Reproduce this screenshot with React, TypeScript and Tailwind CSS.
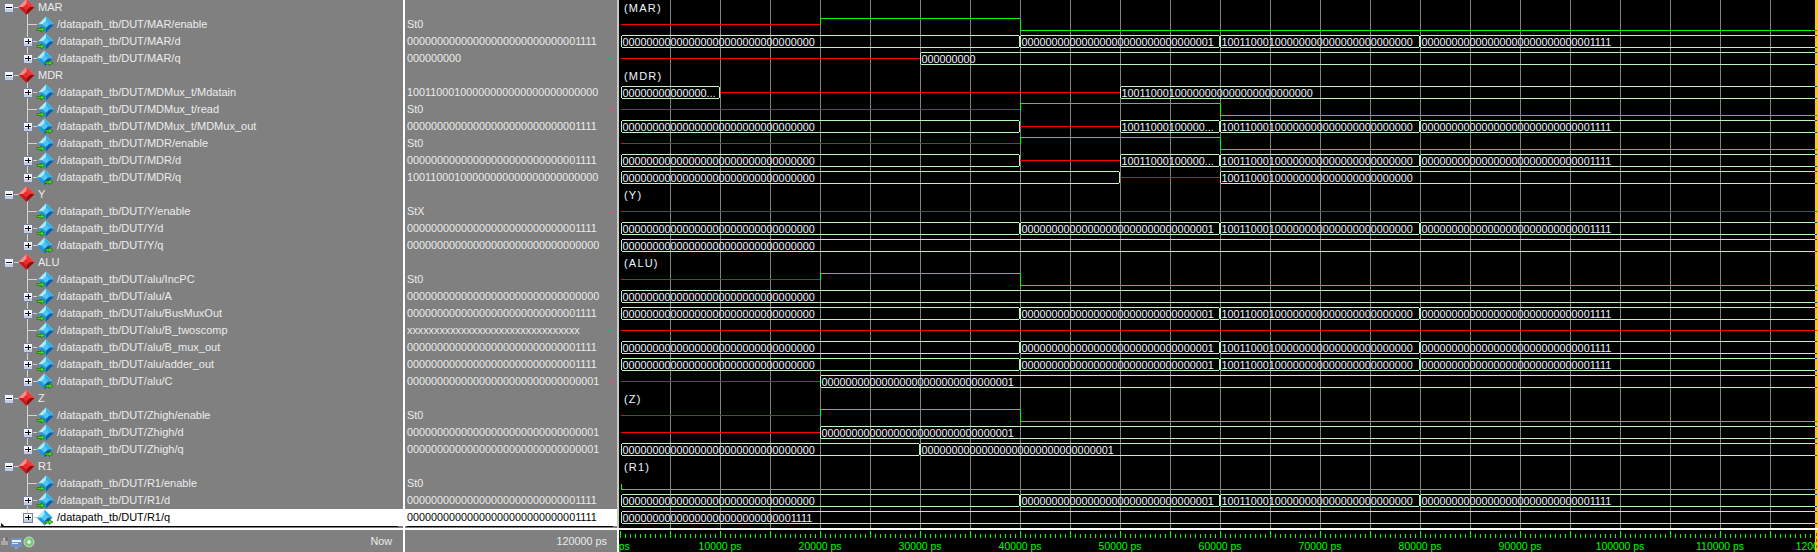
import React from "react";

const Z = "0".repeat(32);
const P = "0".repeat(31) + "1";
const F = "0".repeat(28) + "1111";
const M = "10011000100000000000000000000000";
const X = "x".repeat(32);
const END = 1815;
const S = 621;

type State = "red" | "hi" | "lo";
type Wave =
  | { type: "bit"; pts: [number, State][] }
  | {
      type: "bus";
      segs: { a: number; b: number; kind: "bus" | "red"; text?: string }[];
    }
  | { type: "none" };

const enablePulse = (x1: number, x2: number): Wave => ({
  type: "bit",
  pts: [
    [S, "red"],
    [x1, "hi"],
    [x2, "lo"],
  ],
});

const busD: Wave = {
  type: "bus",
  segs: [
    { a: S, b: 1020, kind: "bus", text: Z },
    { a: 1020, b: 1220, kind: "bus", text: P },
    { a: 1220, b: 1420, kind: "bus", text: M },
    { a: 1420, b: END, kind: "bus", text: F },
  ],
};
const busOut: Wave = {
  type: "bus",
  segs: [
    { a: S, b: 1020, kind: "bus", text: Z },
    { a: 1020, b: 1120, kind: "red" },
    { a: 1120, b: 1220, kind: "bus", text: "10011000100000..." },
    { a: 1220, b: 1420, kind: "bus", text: M },
    { a: 1420, b: END, kind: "bus", text: F },
  ],
};
const full = (text: string): Wave => ({
  type: "bus",
  segs: [{ a: S, b: END, kind: "bus", text }],
});
const redFull: Wave = { type: "bit", pts: [[S, "red"]] };
const busC: Wave = {
  type: "bus",
  segs: [
    { a: S, b: 820, kind: "red" },
    { a: 820, b: END, kind: "bus", text: P },
  ],
};

type Row = {
  group?: string;
  name?: string;
  value?: string;
  dir?: "in" | "out";
  bus?: boolean;
  last?: boolean;
  wave: Wave;
};

const rows: Row[] = [
  { group: "MAR", wave: { type: "none" } },
  { name: "/datapath_tb/DUT/MAR/enable", value: "St0", dir: "in", wave: enablePulse(820, 1020) },
  { name: "/datapath_tb/DUT/MAR/d", value: F, dir: "in", bus: true, wave: busD },
  {
    name: "/datapath_tb/DUT/MAR/q",
    value: "000000000",
    dir: "out",
    bus: true,
    last: true,
    wave: {
      type: "bus",
      segs: [
        { a: S, b: 920, kind: "red" },
        { a: 920, b: END, kind: "bus", text: "000000000" },
      ],
    },
  },
  { group: "MDR", wave: { type: "none" } },
  {
    name: "/datapath_tb/DUT/MDMux_t/Mdatain",
    value: M,
    dir: "in",
    bus: true,
    wave: {
      type: "bus",
      segs: [
        { a: S, b: 720, kind: "bus", text: "00000000000000..." },
        { a: 720, b: 1120, kind: "red" },
        { a: 1120, b: END, kind: "bus", text: M },
      ],
    },
  },
  { name: "/datapath_tb/DUT/MDMux_t/read", value: "St0", dir: "in", wave: enablePulse(1020, 1220) },
  { name: "/datapath_tb/DUT/MDMux_t/MDMux_out", value: F, dir: "out", bus: true, wave: busOut },
  { name: "/datapath_tb/DUT/MDR/enable", value: "St0", dir: "in", wave: enablePulse(1020, 1220) },
  { name: "/datapath_tb/DUT/MDR/d", value: F, dir: "in", bus: true, wave: busOut },
  {
    name: "/datapath_tb/DUT/MDR/q",
    value: M,
    dir: "out",
    bus: true,
    last: true,
    wave: {
      type: "bus",
      segs: [
        { a: S, b: 1120, kind: "bus", text: Z },
        { a: 1120, b: 1220, kind: "red" },
        { a: 1220, b: END, kind: "bus", text: M },
      ],
    },
  },
  { group: "Y", wave: { type: "none" } },
  { name: "/datapath_tb/DUT/Y/enable", value: "StX", dir: "in", wave: redFull },
  { name: "/datapath_tb/DUT/Y/d", value: F, dir: "in", bus: true, wave: busD },
  { name: "/datapath_tb/DUT/Y/q", value: Z, dir: "out", bus: true, last: true, wave: full(Z) },
  { group: "ALU", wave: { type: "none" } },
  { name: "/datapath_tb/DUT/alu/IncPC", value: "St0", dir: "in", wave: enablePulse(820, 1020) },
  { name: "/datapath_tb/DUT/alu/A", value: Z, dir: "in", bus: true, wave: full(Z) },
  { name: "/datapath_tb/DUT/alu/BusMuxOut", value: F, dir: "in", bus: true, wave: busD },
  { name: "/datapath_tb/DUT/alu/B_twoscomp", value: X, dir: "in", wave: redFull },
  { name: "/datapath_tb/DUT/alu/B_mux_out", value: F, dir: "in", bus: true, wave: busD },
  { name: "/datapath_tb/DUT/alu/adder_out", value: F, dir: "in", bus: true, wave: busD },
  { name: "/datapath_tb/DUT/alu/C", value: P, dir: "out", bus: true, last: true, wave: busC },
  { group: "Z", wave: { type: "none" } },
  { name: "/datapath_tb/DUT/Zhigh/enable", value: "St0", dir: "in", wave: enablePulse(820, 1020) },
  { name: "/datapath_tb/DUT/Zhigh/d", value: P, dir: "in", bus: true, wave: busC },
  {
    name: "/datapath_tb/DUT/Zhigh/q",
    value: P,
    dir: "out",
    bus: true,
    last: true,
    wave: {
      type: "bus",
      segs: [
        { a: S, b: 920, kind: "bus", text: Z },
        { a: 920, b: END, kind: "bus", text: P },
      ],
    },
  },
  { group: "R1", wave: { type: "none" } },
  {
    name: "/datapath_tb/DUT/R1/enable",
    value: "St0",
    dir: "in",
    wave: {
      type: "bit",
      pts: [
        [S, "red"],
        [S, "lo"],
      ],
    },
  },
  { name: "/datapath_tb/DUT/R1/d", value: F, dir: "in", bus: true, wave: busD },
  { name: "/datapath_tb/DUT/R1/q", value: F, dir: "out", bus: true, last: true, wave: full(F) },
];

const LINE = "#d4d4d4";

function Box({ minus, x }: { minus?: boolean; x: number }) {
  return (
    <g shapeRendering="crispEdges">
      <rect x={x + 0.5} y={4.5} width={9} height={9} fill="#f4f6fb" stroke="#76809f" />
      <rect x={x + 1} y={10} width={8} height={3} fill="#c4cce2" />
      <rect x={x + 2} y={8} width={6} height={1} fill="#000" />
      {!minus && <rect x={x + 4.5} y={6} width={1} height={5} fill="#000" />}
    </g>
  );
}

function Diamond({ cx, cy, r, c }: { cx: number; cy: number; r: number; c: string[] }) {
  const t = `${cx},${cy - r}`;
  const rr = `${cx + r},${cy}`;
  const b = `${cx},${cy + r}`;
  const l = `${cx - r},${cy}`;
  const k = r * 0.42;
  const it = `${cx},${cy - k}`;
  const ir = `${cx + k},${cy}`;
  const ib = `${cx},${cy + k}`;
  const il = `${cx - k},${cy}`;
  return (
    <g>
      <polygon points={`${t} ${rr} ${ir} ${it} ${il} ${l}`} fill={c[0]} />
      <polygon points={`${t} ${rr} ${ir} ${it}`} fill={c[1]} />
      <polygon points={`${l} ${il} ${ib} ${b}`} fill={c[2]} />
      <polygon points={`${rr} ${ir} ${ib} ${b}`} fill={c[3]} />
      <polygon points={`${it} ${ir} ${ib} ${il}`} fill={c[4]} />
    </g>
  );
}

const RED = ["#ff8a8a", "#f03a3a", "#d01818", "#980808", "#f42828"];
const BLUE = ["#a6ecff", "#2fb4ee", "#1a9ade", "#0a5eb4", "#4cc6f6"];

function Arrow({ x, y }: { x: number; y: number }) {
  return (
    <polygon
      points={`${x},${y + 1.5} ${x + 4},${y + 1.5} ${x + 4},${y} ${x + 8},${y + 2.5} ${x + 4},${y + 5} ${x + 4},${y + 3.5} ${x},${y + 3.5}`}
      fill="#3fe01a"
      stroke="#1c5a10"
      strokeWidth={0.6}
    />
  );
}

function Tree({ row, selected }: { row: Row; selected: boolean }) {
  if (row.group) {
    return (
      <svg width={38} height={17} className="shrink-0">
        <g shapeRendering="crispEdges">
          <rect x={14} y={8} width={6} height={1} fill={LINE} />
          <rect x={27} y={14} width={1} height={3} fill={LINE} />
        </g>
        <Box minus x={4} />
        <Diamond cx={26.5} cy={8} r={8} c={RED} />
      </svg>
    );
  }
  const iconX = row.dir === "in" ? 46 : 44.5;
  return (
    <svg width={57} height={17} className="shrink-0 overflow-visible">
      <g shapeRendering="crispEdges">
        <rect x={27} y={0} width={1} height={row.last ? 6 : 17} fill={LINE} />
        <rect x={27} y={8} width={10} height={1} fill={LINE} />
      </g>
      {row.bus && <Box x={23} />}
      <Diamond cx={iconX} cy={8.5} r={8} c={BLUE} />
      {row.dir === "in" ? <Arrow x={37} y={11} /> : <Arrow x={45} y={10.5} />}
      {selected && <polygon points="1,14 1,18 4,16.5" fill="#111" />}
    </svg>
  );
}

function NameRow({ row, selected }: { row: Row; selected: boolean }) {
  return (
    <div
      className={`flex h-[17px] items-center whitespace-nowrap text-[11px] ${selected ? "bg-white text-[#000]" : "text-[#ececec]"}`}
    >
      <Tree row={row} selected={selected} />
      <span>{row.group ?? row.name}</span>
    </div>
  );
}

function ValueRow({ row, selected }: { row: Row; selected: boolean }) {
  return (
    <div
      className={`flex h-[17px] items-center whitespace-nowrap pl-[2px] ${selected ? "bg-white text-[#000]" : "text-[#ececec]"}`}
    >
      {row.value ?? ""}
    </div>
  );
}

const BUS = "#bdf5bd";
const TEXT = "#eef6ff";

function yOf(i: number, s: State) {
  const mid = 7.5 + 17 * i;
  return s === "red" ? mid : s === "hi" ? mid - 6 : mid + 6;
}

function BitWave({ i, pts }: { i: number; pts: [number, State][] }) {
  const out: React.ReactNode[] = [];
  pts.forEach(([x, s], k) => {
    const nx = k + 1 < pts.length ? pts[k + 1][0] : END;
    const y = yOf(i, s);
    if (nx > x) {
      out.push(
        <line key={`h${k}`} x1={x} x2={nx} y1={y} y2={y} stroke={s === "red" ? "#ff0000" : "#00ff00"} />
      );
    }
    if (k + 1 < pts.length) {
      out.push(
        <line key={`v${k}`} x1={nx + 0.5} x2={nx + 0.5} y1={y} y2={yOf(i, pts[k + 1][1])} stroke="#00ff00" />
      );
    }
  });
  return <g>{out}</g>;
}

function BusWave({
  i,
  segs,
}: {
  i: number;
  segs: { a: number; b: number; kind: "bus" | "red"; text?: string }[];
}) {
  const mid = 7.5 + 17 * i;
  const t = mid - 6;
  const b = mid + 6;
  return (
    <g>
      {segs.map((s, k) => {
        if (s.kind === "red") {
          return <line key={k} x1={s.a} x2={s.b} y1={mid} y2={mid} stroke="#ff0000" />;
        }
        const a = s.a + 0.5;
        const e = s.b === END ? END : s.b - 0.5;
        const rightEnd = s.b === END;
        const d = rightEnd
          ? `M${e},${t} L${a + 1},${t} L${a},${t + 1} L${a},${b - 1} L${a + 1},${b} L${e},${b}`
          : `M${a + 1},${t} L${e - 1},${t} L${e},${t + 1} L${e},${b - 1} L${e - 1},${b} L${a + 1},${b} L${a},${b - 1} L${a},${t + 1} Z`;
        return (
          <g key={k}>
            <path d={d} fill="none" stroke={BUS} />
            {s.text && (
              <text x={s.a + 1.5} y={mid + 4} fill={TEXT} shapeRendering="auto">
                {s.text}
              </text>
            )}
          </g>
        );
      })}
    </g>
  );
}

function WavePane() {
  const grid: number[] = [];
  for (let x = 670; x < 1815; x += 50) grid.push(x);
  return (
    <svg
      width={1199}
      height={528}
      viewBox="619 0 1199 528"
      className="block shrink-0 bg-black text-[10.8px]"
      shapeRendering="crispEdges"
    >
      {grid.map((x) => (
        <rect key={x} x={x} y={0} width={1} height={528} fill="#808080" />
      ))}
      {rows.map((r, i) => {
        if (r.group) {
          return (
            <text key={i} x={624} y={12 + 17 * i} fill={TEXT} letterSpacing={1.2} fontSize={11}>
              {`(${r.group})`}
            </text>
          );
        }
        if (r.wave.type === "bit") return <BitWave key={i} i={i} pts={r.wave.pts} />;
        if (r.wave.type === "bus") return <BusWave key={i} i={i} segs={r.wave.segs} />;
        return null;
      })}
      <rect x={1815} y={0} width={3} height={528} fill="#ffcc00" />
      {rows.map((r, i) => {
        const mid = 7 + 17 * i;
        if (r.wave.type === "bus") {
          const busAtEnd = r.wave.segs[r.wave.segs.length - 1].kind === "bus";
          return busAtEnd ? (
            <g key={i} fill="#2020d0">
              <rect x={1815} y={mid - 6} width={2} height={1} />
              <rect x={1815} y={mid + 6} width={2} height={1} />
            </g>
          ) : null;
        }
        if (r.wave.type === "bit") {
          const s = r.wave.pts[r.wave.pts.length - 1][1];
          return (
            <rect key={i} x={1815} y={s === "lo" ? mid + 6 : mid} width={2} height={1} fill="#ff2000" />
          );
        }
        return null;
      })}
    </svg>
  );
}

function Ruler() {
  const ticks: number[] = [];
  for (let x = 620; x < 1815; x += 5) ticks.push(x);
  const labels: number[] = [];
  for (let t = 0; t <= 120000; t += 10000) labels.push(t);
  return (
    <svg
      width={1199}
      height={22}
      viewBox="619 530 1199 22"
      className="block shrink-0 bg-black text-[10.4px]"
    >
      <g shapeRendering="crispEdges">
        {ticks.map((x) => {
          const big = (x - 620) % 50 === 0;
          return (
            <rect key={x} x={x} y={big ? 531 : 534} width={1} height={big ? 7 : 4} fill="#00ff00" />
          );
        })}
      </g>
      {labels.map((t) => (
        <text key={t} x={620 + t / 100} y={550} fill="#00ff00" textAnchor="middle">
          {`${t} ps`}
        </text>
      ))}
      <g shapeRendering="crispEdges">
        <rect x={1815} y={530} width={3} height={22} fill="#ffcc00" />
        <rect x={1816} y={533} width={1} height={3} fill="#ff3000" />
        <rect x={1816} y={539} width={1} height={3} fill="#ff3000" />
        <rect x={1816} y={545} width={1} height={3} fill="#ff3000" />
      </g>
    </svg>
  );
}

function FooterIcons() {
  return (
    <svg width={36} height={22} className="shrink-0">
      <g shapeRendering="crispEdges">
        <rect x={1} y={11} width={7} height={4} fill="#a8a8a8" />
        <rect x={3} y={8} width={2} height={3} fill="#b8b8b8" />
        <rect x={6} y={7} width={2} height={4} fill="#707070" />
        <rect x={11} y={8} width={11} height={9} fill="#6f93c8" />
        <rect x={12} y={10} width={9} height={2} fill="#e8f0fa" />
        <rect x={12} y={13} width={6} height={1} fill="#dfe8f5" />
        <rect x={15} y={17} width={3} height={2} fill="#8aa4cc" />
      </g>
      <circle cx={29} cy={12} r={5} fill="#7ec87e" stroke="#b8e4b8" />
      <path d="M27 12h4M29 10v4" stroke="#f0fff0" strokeWidth={1.5} />
    </svg>
  );
}

export default function App() {
  return (
    <div className="flex h-[552px] w-[1818px] flex-col overflow-hidden bg-[#808080] font-['Liberation_Sans',Arial,sans-serif] text-[10.8px]">
      <div className="flex h-[528px] shrink-0">
        <div className="flex w-[403px] shrink-0 flex-col overflow-hidden">
          <div className="mt-[-1px]">
            {rows.map((r, i) => (
              <NameRow key={i} row={r} selected={i === 30} />
            ))}
          </div>
          <div className="ml-[2px] mr-[5px] h-px shrink-0 bg-black" />
        </div>
        <div className="w-[2px] shrink-0 bg-white" />
        <div className="flex w-[212px] shrink-0 flex-col overflow-hidden">
          <div className="mt-[-1px]">
            {rows.map((r, i) => (
              <ValueRow key={i} row={r} selected={i === 30} />
            ))}
          </div>
          <div className="ml-[2px] mr-[4px] h-px shrink-0 bg-black" />
        </div>
        <div className="w-[2px] shrink-0 bg-[#c8c8c8]" />
        <WavePane />
      </div>
      <div className="h-[2px] shrink-0 bg-white" />
      <div className="flex h-[22px] shrink-0">
        <div className="flex w-[403px] shrink-0 items-center justify-between pr-[11px] text-[#ececec]">
          <FooterIcons />
          <span>Now</span>
        </div>
        <div className="w-[2px] shrink-0 bg-white" />
        <div className="flex w-[212px] shrink-0 items-center justify-end pr-[10px] text-[#ececec]">
          120000 ps
        </div>
        <div className="w-[2px] shrink-0 bg-white" />
        <Ruler />
      </div>
    </div>
  );
}
